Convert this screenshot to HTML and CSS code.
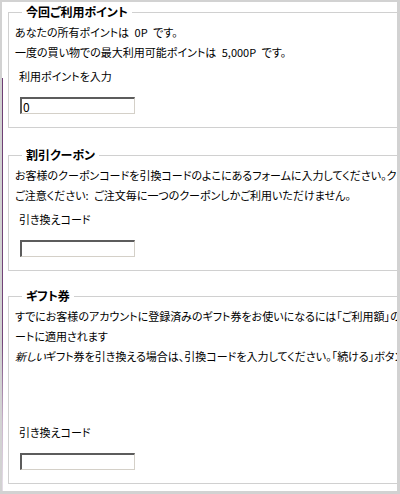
FILE: index.html
```html
<!DOCTYPE html>
<html lang="ja">
<head>
<meta charset="utf-8">
<title>ポイント・クーポン・ギフト券</title>
<link rel="stylesheet" href="styles.css">
</head>
<body>
<div class="frame">
  <fieldset class="box box-first">
    <legend class="box-title">今回ご利用ポイント</legend>
    <div class="line">あなたの所有ポイントは 0P です。</div>
    <div class="line">一度の買い物での最大利用可能ポイントは 5,000P です。</div>
    <div class="label">利用ポイントを入力</div>
    <input class="field" type="text" value="0">
  </fieldset>

  <fieldset class="box box-second">
    <legend class="box-title">割引クーポン</legend>
    <div class="line">お客様のクーポンコードを引換コードのよこにあるフォームに入力してください。クーポンコードをお持ちでない場合は空欄のままにしてください。</div>
    <div class="line">ご注意ください: ご注文毎に一つのクーポンしかご利用いただけません。</div>
    <div class="label">引き換えコード</div>
    <input class="field" type="text" value="">
  </fieldset>

  <fieldset class="box box-third">
    <legend class="box-title">ギフト券</legend>
    <div class="line">すでにお客様のアカウントに登録済みのギフト券をお使いになるには「ご利用額」の欄にチェックを入れてください。残高は自動的にショッピングカ</div>
    <div class="line">ートに適用されます</div>
    <div class="line"><em class="new">新しい</em>ギフト券を引き換える場合は、引換コードを入力してください。「続ける」ボタンを押すと適用されます。</div>
    <div class="label label-gift">引き換えコード</div>
    <input class="field" type="text" value="">
  </fieldset>
</div>
</body>
</html>
```
FILE: styles.css
```css
html, body {
  margin: 0;
  padding: 0;
  background: #ffffff;
}

body {
  font-family: "Noto Sans CJK JP", "Liberation Sans", sans-serif;
  font-size: 11px;
  font-feature-settings: "palt";
  color: #000000;
}

.frame {
  width: 400px;
  height: 494px;
  box-sizing: border-box;
  overflow: hidden;
  border-style: solid;
  border-color: #d2d2d2;
  border-width: 2px 3px 3px 2px;
  padding: 0 0 0 6px;
  background-color: #ffffff;
  background-image: linear-gradient(to bottom,
    rgba(255,255,255,0) 0,
    rgba(255,255,255,0) 76px,
    #6e3f74 76px,
    #74467a 340px,
    #c9b3cb 420px,
    #e4dce6 480px);
  background-size: 1px 100%;
  background-repeat: no-repeat;
  background-position: 0 0;
}

.box {
  width: 720px;
  margin: 0;
  padding: 2px 6px 13px 6px;
  border: 1px solid #d0d0d0;
  box-sizing: border-box;
}

.box-first {
  margin-top: 2px;
}

.box-second {
  margin-top: 19px;
}

.box-third {
  margin-top: 17px;
}

.box-title {
  font-weight: bold;
  font-size: 12px;
  line-height: 16px;
  padding: 0 4px;
  margin-left: 7px;
}

.line {
  line-height: 20px;
  white-space: nowrap;
  word-spacing: 3px;
}

.new {
  font-style: italic;
}

.label {
  line-height: 20px;
  margin-top: 4px;
  padding-left: 4px;
  white-space: nowrap;
}

.label-gift {
  margin-top: 56px;
}

.field {
  display: block;
  margin: 11px 0 0 5px;
  width: 115px;
  height: 17px;
  box-sizing: border-box;
  padding: 0 1px;
  border-style: solid;
  border-width: 2px 1px 1px 2px;
  border-color: #5c5c5c #d4d0c8 #d4d0c8 #5c5c5c;
  font-family: "Noto Sans CJK JP", "Liberation Sans", sans-serif;
  font-size: 12px;
  line-height: 13px;
  color: #000000;
  background: #ffffff;
  outline: none;
}
```
